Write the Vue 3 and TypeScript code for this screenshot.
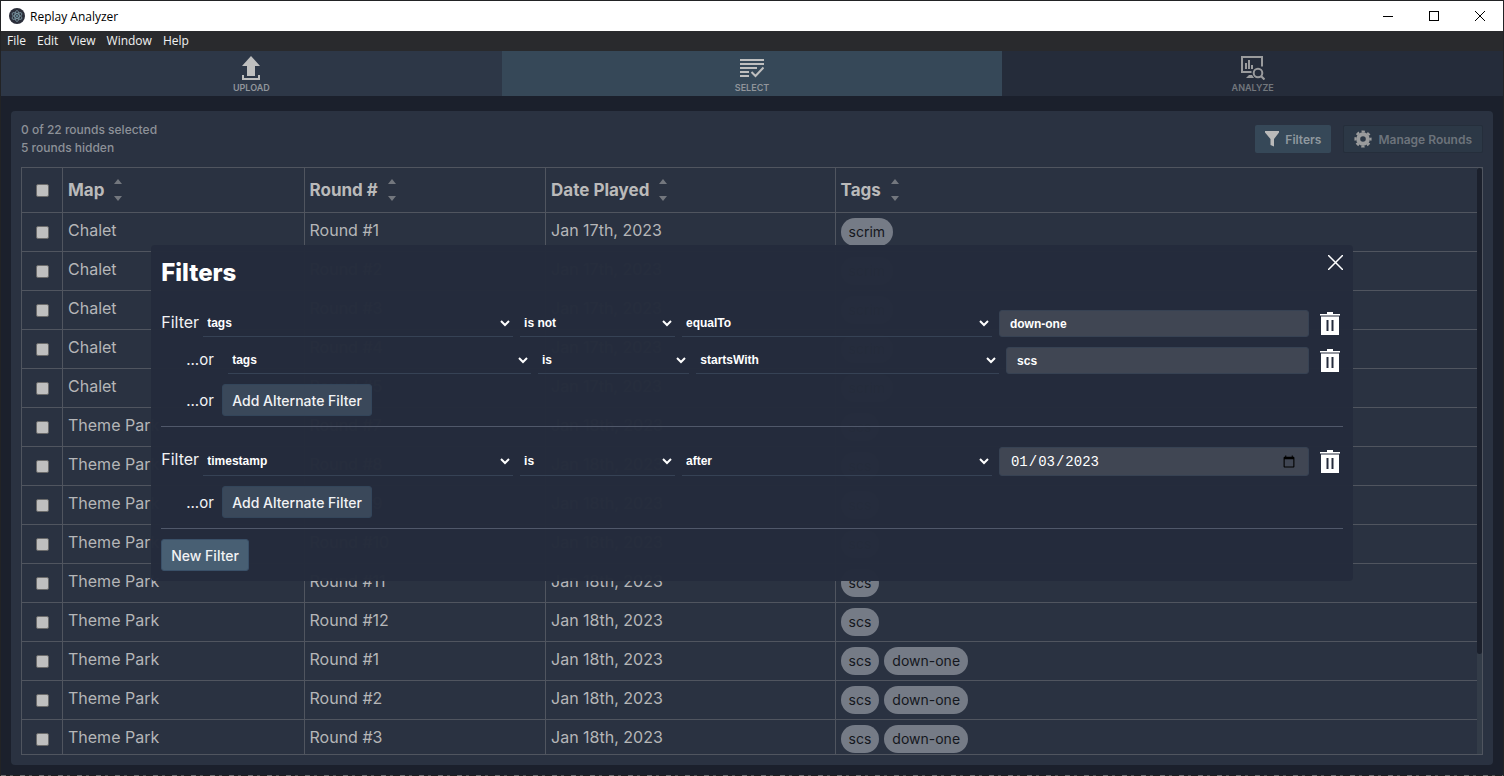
<script setup lang="ts">
import { ref } from 'vue'

interface Round {
  map: string
  round: string
  date: string
  tags: string[]
}

interface Condition {
  field: string
  verb: string
  operator: string
  value: string
}

const menuItems: string[] = ['File', 'Edit', 'View', 'Window', 'Help']
const columns: string[] = ['Map', 'Round #', 'Date Played', 'Tags']

const makeRounds = (map: string, numbers: number[], date: string, tags: string[]): Round[] =>
  numbers.map((n) => ({ map, round: `Round #${n}`, date, tags }))

const rounds: Round[] = [
  ...makeRounds('Chalet', [1, 2, 3, 4, 5], 'Jan 17th, 2023', ['scrim']),
  ...makeRounds('Theme Park', [7, 8, 9, 10, 11, 12], 'Jan 18th, 2023', ['scs']),
  ...makeRounds('Theme Park', [1, 2, 3], 'Jan 18th, 2023', ['scs', 'down-one']),
]

const fieldOptions: string[] = ['tags', 'timestamp', 'map', 'round']
const verbOptions: string[] = ['is', 'is not']
const textOperators: string[] = ['equalTo', 'startsWith', 'contains']
const dateOperators: string[] = ['before', 'after']

const groups = ref<Condition[][]>([
  [
    { field: 'tags', verb: 'is not', operator: 'equalTo', value: 'down-one' },
    { field: 'tags', verb: 'is', operator: 'startsWith', value: 'scs' },
  ],
  [{ field: 'timestamp', verb: 'is', operator: 'after', value: '2023-01-03' }],
])

const operatorsFor = (c: Condition): string[] => (c.field === 'timestamp' ? dateOperators : textOperators)
</script>

<template>
  <div class="window">
    <header class="titlebar">
      <svg class="app-icon" width="16" height="16" viewBox="0 0 16 16" aria-hidden="true">
        <circle cx="8" cy="8" r="8" fill="#2b2e3a" />
        <g fill="none" stroke="#a9d3de" stroke-width="0.7" opacity="0.75">
          <ellipse cx="8" cy="8" rx="5.500" ry="2.200" transform="rotate(30 8 8)" />
          <ellipse cx="8" cy="8" rx="5.500" ry="2.200" transform="rotate(90 8 8)" />
          <ellipse cx="8" cy="8" rx="5.500" ry="2.200" transform="rotate(150 8 8)" />
        </g>
        <circle cx="8" cy="8" r="0.8" fill="#9feaf9" />
      </svg>
      <span class="app-title">Replay Analyzer</span>
      <button class="win-btn" aria-label="Minimize">
        <svg width="10" height="10" viewBox="0 0 10 10"><path d="M0 5.500H10" stroke="#000" /></svg>
      </button>
      <button class="win-btn" aria-label="Maximize">
        <svg width="10" height="10" viewBox="0 0 10 10"><rect x="0.5" y="0.5" width="9" height="9" fill="none" stroke="#000" /></svg>
      </button>
      <button class="win-btn" aria-label="Close window">
        <svg width="10" height="10" viewBox="0 0 10 10"><path d="M0 0L10 10M10 0L0 10" stroke="#000" /></svg>
      </button>
    </header>

    <nav class="menubar" aria-label="Application menu">
      <button v-for="item in menuItems" :key="item" class="menu-item">{{ item }}</button>
    </nav>

    <div class="content">
      <nav class="tabs" aria-label="Steps">
        <button class="tab">
          <svg width="24" height="24" viewBox="0 0 24 24" fill="currentColor">
            <path d="M12 0L21 10H16V20H8V10H3Z" />
            <path d="M3 19H5V22H19V19H21V24H3Z" />
          </svg>
          <span>UPLOAD</span>
        </button>
        <button class="tab active">
          <svg width="24" height="24" viewBox="0 0 24 24" fill="currentColor">
            <path d="M0 3H24V5H0ZM0 7H24V9H0ZM0 11H17V13H0ZM0 15H9V17H0ZM0 19H9V21H0Z" />
            <path d="M11.500 16L15.500 20L23.500 11.500" fill="none" stroke="currentColor" stroke-width="2" />
          </svg>
          <span>SELECT</span>
        </button>
        <button class="tab disabled">
          <svg width="24" height="24" viewBox="0 0 24 24" fill="currentColor">
            <path d="M10.500 16H1V1H21V10.500" fill="none" stroke="currentColor" stroke-width="2" />
            <path d="M4 7H6V13H4ZM7 4H9V13H7ZM10 9H12V13H10Z" />
            <path d="M8 19H11L13 22H5Z" />
            <circle cx="17" cy="17" r="4.300" fill="none" stroke="currentColor" stroke-width="2" />
            <path d="M20 20L23.500 23.500" stroke="currentColor" stroke-width="2.200" />
          </svg>
          <span>ANALYZE</span>
        </button>
      </nav>

      <main class="panel">
        <div class="panel-head">
          <p class="summary">0 of 22 rounds selected<br />5 rounds hidden</p>
          <button class="tool-btn">
            <svg width="14" height="16" viewBox="0 0 14 16" fill="#bababa"><path d="M0 0H14V1.500L9 8V15.500L5.500 14V8L0 1.500Z" /></svg>
            <span>Filters</span>
          </button>
          <button class="tool-btn muted">
            <svg width="18" height="18" viewBox="0 0 18 18">
              <circle cx="9" cy="9" r="4.800" fill="none" stroke="#9a9b9c" stroke-width="4" />
              <circle cx="9" cy="9" r="7.500" fill="none" stroke="#9a9b9c" stroke-width="2.200" stroke-dasharray="3.300 2.590" stroke-dashoffset="1.650" />
            </svg>
            <span>Manage Rounds</span>
          </button>
        </div>

        <div class="table-box">
          <div class="table-scroll">
            <table>
              <colgroup>
                <col class="c-check" />
                <col class="c-map" />
                <col class="c-round" />
                <col class="c-date" />
                <col />
              </colgroup>
              <thead>
                <tr>
                  <th class="check"><input type="checkbox" aria-label="Select all rounds" /></th>
                  <th v-for="c in columns" :key="c">
                    <div class="th-inner">
                      <span>{{ c }}</span>
                      <svg width="8" height="22" viewBox="0 0 8 22" fill="#73777e" aria-hidden="true">
                        <path d="M0 5L4 0L8 5ZM0 17H8L4 22Z" />
                      </svg>
                    </div>
                  </th>
                </tr>
              </thead>
              <tbody>
                <tr v-for="(r, i) in rounds" :key="i">
                  <td class="check"><input type="checkbox" :aria-label="`Select ${r.map} ${r.round}`" /></td>
                  <td>{{ r.map }}</td>
                  <td>{{ r.round }}</td>
                  <td>{{ r.date }}</td>
                  <td>
                    <div class="tags"><span v-for="t in r.tags" :key="t" class="tag">{{ t }}</span></div>
                  </td>
                </tr>
              </tbody>
            </table>
          </div>
          <div class="track" aria-hidden="true"><div class="thumb"></div></div>
        </div>
      </main>

      <div class="overlay">
        <section class="modal" role="dialog" aria-labelledby="filters-title">
          <div class="modal-head">
            <h2 id="filters-title">Filters</h2>
            <button class="close" aria-label="Close">
              <svg width="15" height="15" viewBox="0 0 15 15"><path d="M0 0L15 15M15 0L0 15" stroke="#fff" stroke-width="1.500" /></svg>
            </button>
          </div>

          <div v-for="(group, g) in groups" :key="g" class="group">
            <div v-for="(c, i) in group" :key="i" class="cond" :class="{ alt: i > 0 }">
              <label class="cond-label" :for="`field-${g}-${i}`">{{ i === 0 ? 'Filter' : '...or' }}</label>
              <div class="cond-fields">
                <select :id="`field-${g}-${i}`" v-model="c.field">
                  <option v-for="o in fieldOptions" :key="o">{{ o }}</option>
                </select>
                <select v-model="c.verb" aria-label="Condition">
                  <option v-for="o in verbOptions" :key="o">{{ o }}</option>
                </select>
                <select v-model="c.operator" aria-label="Comparison">
                  <option v-for="o in operatorsFor(c)" :key="o">{{ o }}</option>
                </select>
                <input v-if="c.field === 'timestamp'" v-model="c.value" class="value date" type="date" aria-label="Date" />
                <input v-else v-model="c.value" class="value" type="text" aria-label="Value" />
              </div>
              <button class="trash" aria-label="Delete filter">
                <svg width="20" height="23" viewBox="0 0 20 23" fill="#fff">
                  <path d="M7 0H13V2H20V3.500H0V2H7Z" />
                  <path fill-rule="evenodd" d="M1 4.500H19V23H1ZM6.500 8V19H8.500V8ZM11.500 8V19H13.500V8Z" />
                </svg>
              </button>
            </div>
            <div class="add-row">
              <span class="or">...or</span>
              <button class="btn">Add Alternate Filter</button>
            </div>
          </div>

          <button class="btn primary">New Filter</button>
        </section>
      </div>
    </div>
    <div class="edge" aria-hidden="true"></div>
  </div>
</template>

<style>
body {
  background: #1b202c;
}
</style>

<style scoped>
* {
  box-sizing: border-box;
}
button {
  margin: 0;
  padding: 0;
  border: 0;
  background: none;
  color: inherit;
  font: inherit;
}
svg {
  display: block;
  flex: none;
}
.window {
  display: flex;
  flex-direction: column;
  height: 100vh;
  border: 1px solid #222325;
  border-bottom: 0;
  overflow: hidden;
  background: #1b202c;
  color: #b5b6b8;
  font-family: Inter, 'Liberation Sans', sans-serif;
}
.titlebar {
  display: flex;
  align-items: center;
  flex: none;
  height: 30px;
  padding-left: 8px;
  background: #fff;
  color: #000;
  font: 12px 'Open Sans', 'Noto Sans', sans-serif;
}
.app-title {
  flex: 1;
  margin-left: 5px;
}
.win-btn {
  display: flex;
  align-items: center;
  justify-content: center;
  width: 46px;
  height: 30px;
}
.menubar {
  display: flex;
  align-items: center;
  flex: none;
  gap: 11px;
  height: 20px;
  padding: 0 0 2px 6px;
  background: #292a2d;
  color: #f1f1f1;
  font: 12px 'Open Sans', 'Noto Sans', sans-serif;
}
.content {
  position: relative;
  display: flex;
  flex-direction: column;
  flex: 1;
  min-height: 0;
}
.tabs {
  display: flex;
  flex: none;
  height: 45px;
}
.tab {
  display: flex;
  flex: 1;
  flex-direction: column;
  align-items: center;
  padding-top: 5px;
  background: #2d3747;
  color: #bfbfbf;
}
.tab span {
  color: #91959b;
  font-size: 9px;
  font-weight: 600;
  line-height: 15px;
}
.tab.active {
  background: #364858;
}
.tab.disabled {
  background: #252c3a;
  color: #9a9b9d;
}
.tab.disabled span {
  color: #73777d;
}
.panel {
  display: flex;
  flex-direction: column;
  flex: 1;
  min-height: 0;
  margin: 15px 10px 10px;
  padding: 10px;
  border-radius: 4px;
  background: #2a3241;
}
.panel-head {
  display: flex;
  align-items: center;
  gap: 12px;
  margin-bottom: 10px;
}
.summary {
  flex: 1;
  margin: 0;
  color: #8d9198;
  font-size: 12px;
  font-weight: 500;
  line-height: 18px;
}
.tool-btn {
  display: flex;
  align-items: center;
  gap: 6px;
  height: 28px;
  padding: 0 10px;
  border-radius: 2px;
  background: #364858;
  color: #8f989f;
  font-size: 12px;
  font-weight: 600;
}
.tool-btn.muted {
  border: 1px solid #252e3b;
  background: #2c3846;
  color: #6c737b;
}
.table-box {
  display: flex;
  flex: 1;
  min-height: 0;
  border: 1px solid #50555f;
}
.table-scroll {
  flex: 1;
  min-width: 0;
  overflow-y: auto;
  scrollbar-width: none;
}
.track {
  flex: none;
  width: 5px;
  background: #333c48;
}
.thumb {
  height: 83%;
  border-radius: 3px;
  background: #1b202c;
}
table {
  width: 100%;
  table-layout: fixed;
  border-collapse: separate;
  border-spacing: 0;
}
.c-check {
  width: 41px;
}
.c-map,
.c-round {
  width: 16.6%;
}
.c-date {
  width: 19.9%;
}
th,
td {
  height: 39px;
  padding: 0 5px;
  border-right: 1px solid #50555f;
  border-bottom: 1px solid #50555f;
  font-size: 16px;
  line-height: 34px;
  text-align: left;
  vertical-align: top;
}
th {
  height: 45px;
  color: #bababa;
  font-size: 17px;
  font-weight: 700;
  vertical-align: middle;
}
th:last-child,
td:last-child {
  border-right: 0;
}
.th-inner {
  display: flex;
  align-items: center;
  gap: 10px;
}
.check {
  padding: 0;
  line-height: 0;
  text-align: center;
  vertical-align: middle;
}
.check input {
  appearance: none;
  width: 13px;
  height: 13px;
  margin: 0;
  border: 1px solid #6b6b6b;
  border-radius: 2px;
  background: #bfbfbf;
}
.tags {
  display: flex;
  gap: 5px;
  padding-top: 5px;
}
.tag {
  height: 28px;
  padding: 0 8px;
  border-radius: 14px;
  background: #757b86;
  color: #14171d;
  font-size: 14px;
  line-height: 27px;
}
.overlay {
  position: absolute;
  inset: 0;
  display: flex;
  align-items: center;
  justify-content: center;
}
.modal {
  width: 80%;
  padding: 10px;
  border-radius: 4px;
  background: rgba(36, 44, 60, 0.99);
  color: #f1f2f4;
}
.modal-head {
  display: flex;
  align-items: flex-start;
  justify-content: space-between;
  height: 35px;
}
h2 {
  margin: 0;
  color: #fff;
  font-size: 24px;
  font-weight: 800;
  line-height: 35px;
}
.group {
  display: flex;
  flex-direction: column;
  gap: 10px;
  padding: 20px 0 10px;
  border-bottom: 1px solid #50586a;
}
.cond {
  display: flex;
  align-items: stretch;
  gap: 7px;
}
.cond.alt,
.add-row {
  padding-left: 25px;
}
.cond-label {
  width: 35px;
  font-size: 16px;
  line-height: 25px;
  white-space: nowrap;
}
.alt .cond-label {
  font-size: 15px;
}
.cond-fields {
  display: grid;
  flex: 1;
  grid-template-columns: 2fr 1fr 2fr 2fr;
  gap: 7px;
  min-width: 0;
}
select,
.value {
  min-width: 0;
  width: 100%;
  height: 27px;
  margin: 0;
  color: #fff;
  font: bold 12px 'Liberation Sans', Arial, sans-serif;
}
select {
  padding: 0;
  border: 0;
  border-bottom: 1px solid #364255;
  background: transparent;
}
option {
  background: #242c3c;
}
.value {
  padding: 0 10px;
  border: 1px solid #374253;
  border-radius: 3px;
  background: #404653;
}
.date {
  height: 29px;
  font: 14px 'Liberation Mono', 'Courier New', monospace;
}
.cond:has(.date) select {
  height: 29px;
}
.trash {
  display: flex;
  align-items: center;
  justify-content: flex-end;
  width: 27px;
  padding-right: 3px;
}
.add-row {
  display: flex;
  align-items: center;
}
.or {
  width: 36px;
  font-size: 15px;
}
.btn {
  display: block;
  height: 32px;
  padding: 0 9px;
  border: 1px solid #33455a;
  border-radius: 3px;
  background: #3a485a;
  font-size: 14px;
  font-weight: 500;
}
.btn.primary {
  margin-top: 10px;
  border-color: #3a5068;
  background: #485f73;
}
.edge {
  flex: none;
  height: 1px;
  background: repeating-linear-gradient(90deg, #6d6d6d 0 5px, #1f1f1f 5px 9px, #555 9px 12px, #1f1f1f 12px 19px);
}
</style>
